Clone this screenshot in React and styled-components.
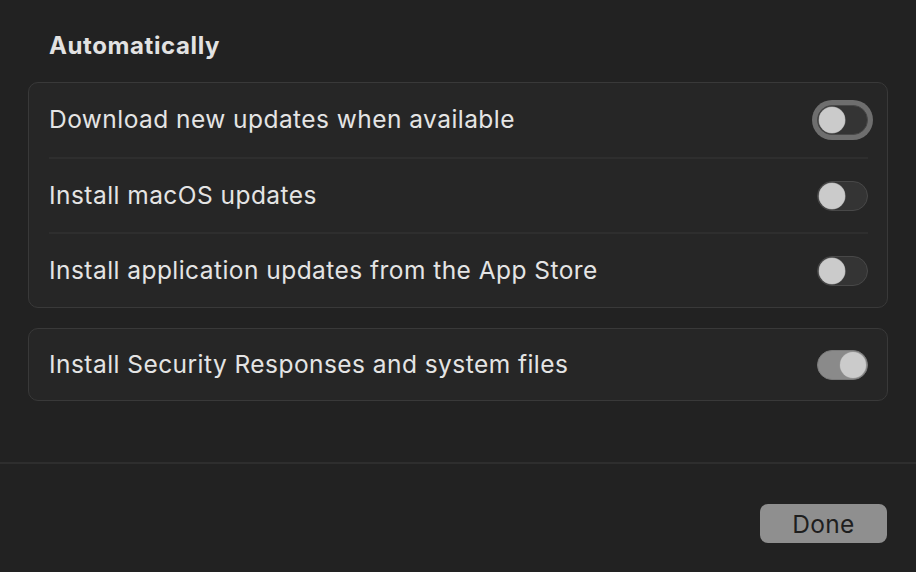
import React from "react";
import styled, { createGlobalStyle } from "styled-components";

const Global = createGlobalStyle`
  html, body {
    margin: 0;
    background: #222222;
  }
  body {
    font-family: Inter, "Noto Sans", "Liberation Sans", sans-serif;
    color: #e4e4e4;
  }
`;

const Sheet = styled.div`
  width: 916px;
  height: 572px;
  background: #222222;
  display: flex;
  flex-direction: column;
  box-sizing: border-box;
`;

const Content = styled.div`
  padding: 30px 28px 0 28px;
  height: 464px;
  box-sizing: border-box;
  border-bottom: 2px solid #2e2e2e;
`;

const Title = styled.h2`
  margin: 0 0 20px 21px;
  font-size: 24px;
  font-weight: 700;
  line-height: 32px;
  color: #e2e2e2;
  letter-spacing: 0.6px;
`;

const Card = styled.div`
  background: #262626;
  border: 1px solid #393939;
  border-radius: 10px;
  margin-bottom: 20px;
`;

const Row = styled.div`
  display: flex;
  align-items: center;
  justify-content: space-between;
  height: ${(p) => p.height || 75}px;
  margin: 0 19px 0 20px;
  border-top: ${(p) => (p.first ? "none" : "2px solid #2e2e2e")};
  box-sizing: border-box;
`;

const Label = styled.span`
  font-size: 24.5px;
  line-height: 30px;
  margin-bottom: 2px;
  color: #e4e4e4;
  letter-spacing: 0.45px;
`;

const Track = styled.div`
  position: relative;
  width: 51px;
  height: 30px;
  border-radius: 15px;
  box-sizing: border-box;
  background: ${(p) => (p.on ? "#8a8a8a" : "#343434")};
  border: 1px solid ${(p) => (p.on ? "#7a7a7a" : "#484848")};
  box-shadow: ${(p) => (p.focus ? "0 0 0 5px #6e6e6e" : "none")};
`;

const Knob = styled.div`
  position: absolute;
  top: 1px;
  left: ${(p) => (p.on ? "22px" : "1px")};
  width: 26px;
  height: 26px;
  border-radius: 50%;
  background: #cbcbcb;
  box-shadow: 0 0 0 0.5px #9a9a9a;
`;

const Footer = styled.div`
  flex: 1;
  display: flex;
  justify-content: flex-end;
  align-items: flex-start;
  padding: 40px 29px 0 0;
`;

const Button = styled.button`
  width: 127px;
  height: 39px;
  border: none;
  border-radius: 8px;
  background: #8f8f8f;
  color: #1e1e1e;
  font-family: inherit;
  font-size: 24.5px;
  letter-spacing: 0.3px;
  padding: 0;
`;

const Toggle = ({ on, focus }) => (
  <Track on={on} focus={focus}>
    <Knob on={on} />
  </Track>
);

export default function App() {
  return (
    <Sheet>
      <Global />
      <Content>
        <Title>Automatically</Title>
        <Card>
          <Row first height={74}>
            <Label>Download new updates when available</Label>
            <Toggle focus />
          </Row>
          <Row>
            <Label>Install macOS updates</Label>
            <Toggle />
          </Row>
          <Row>
            <Label>Install application updates from the App Store</Label>
            <Toggle />
          </Row>
        </Card>
        <Card>
          <Row first height={71}>
            <Label>Install Security Responses and system files</Label>
            <Toggle on />
          </Row>
        </Card>
      </Content>
      <Footer>
        <Button>Done</Button>
      </Footer>
    </Sheet>
  );
}
